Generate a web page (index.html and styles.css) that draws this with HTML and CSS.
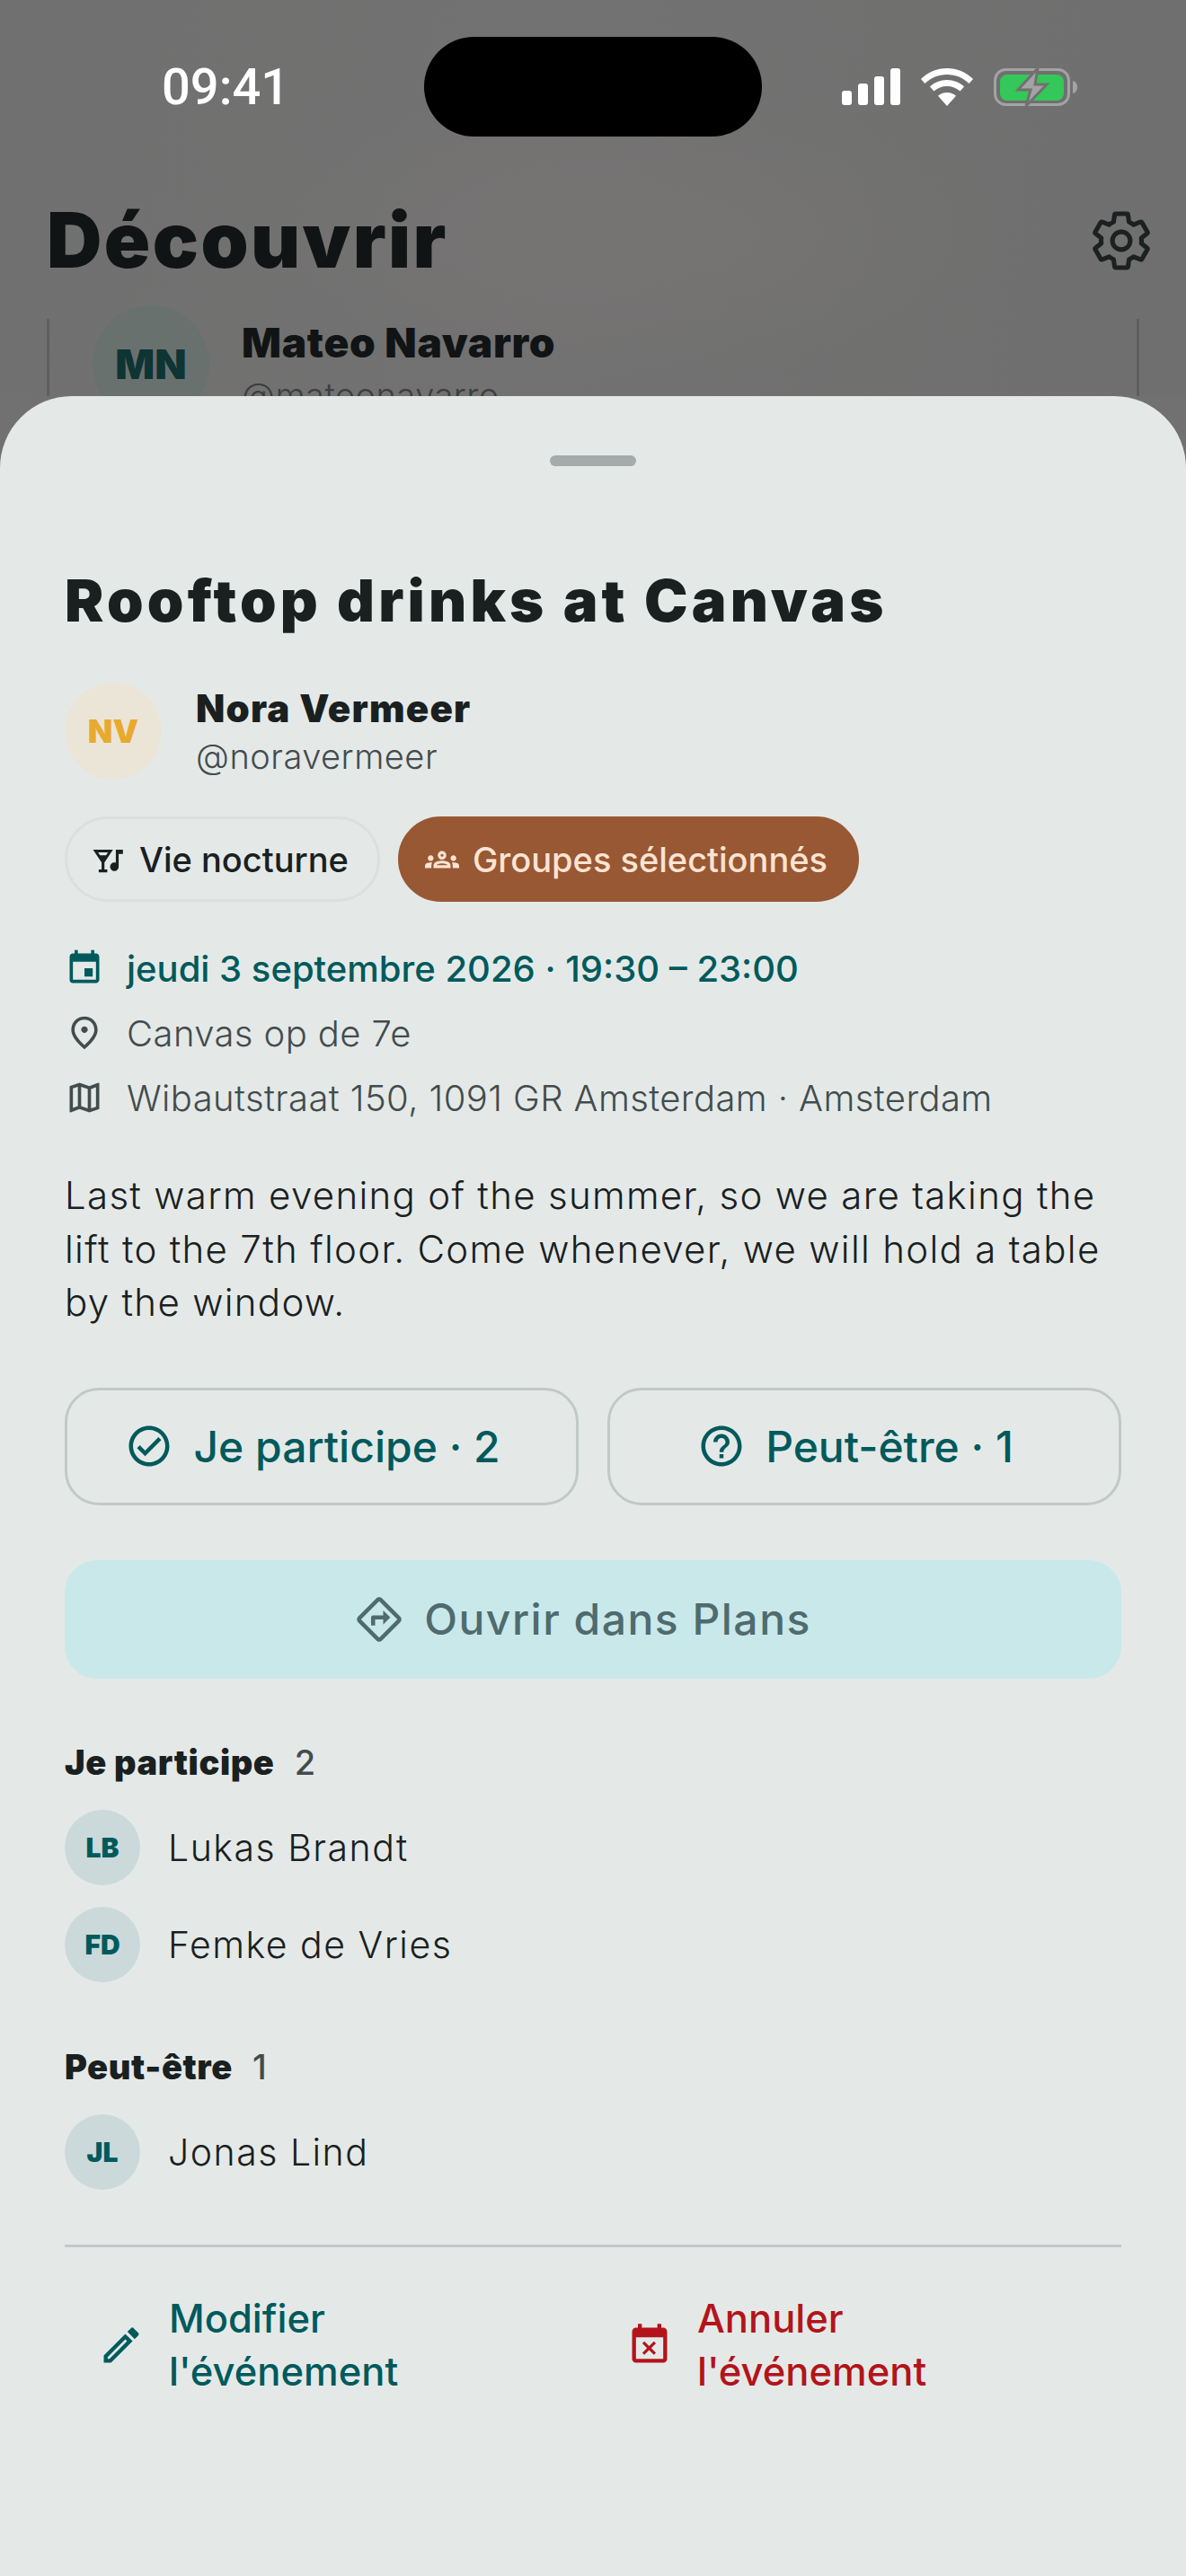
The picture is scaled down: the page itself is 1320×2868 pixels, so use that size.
FILE: index.html
```html
<!DOCTYPE html>
<html lang="fr">
<head>
    <meta charset="UTF-8">
    <meta name="viewport" content="width=device-width, initial-scale=1.0">
    <title>Rooftop drinks at Canvas</title>
    <link rel="stylesheet" href="styles.css">
</head>
<body>
    <div class="screen">
        <div class="backdrop">
            <div class="status-bar">
                <span class="clock">09:41</span>
                <div class="island"></div>
                <div class="status-icons">
                    <svg class="signal" viewBox="0 0 65 41" fill="#fff">
                        <rect x="0" y="25" width="11" height="16" rx="3"/>
                        <rect x="18" y="17" width="11" height="24" rx="3"/>
                        <rect x="36" y="9" width="11" height="32" rx="3"/>
                        <rect x="54" y="0" width="11" height="41" rx="3"/>
                    </svg>
                    <svg class="wifi" viewBox="0 0 58 42" fill="#fff">
                        <path d="M29 0c11 0 21 4 29 12l-4.500 5C47 10.500 38.500 7 29 7S11 10.500 4.500 17L0 12C8 4 18 0 29 0z"/>
                        <path d="M29 13c7.500 0 14 2.800 19 7.500L43.500 25.500C39.600 22 34.600 20 29 20s-10.600 2-14.500 5.500L10 20.500C15 15.800 21.500 13 29 13z"/>
                        <path d="M29 27c4 0 7.500 1.400 10 3.800L29 42 19 30.800C21.500 28.400 25 27 29 27z"/>
                    </svg>
                    <svg class="battery" viewBox="0 0 93 44">
                        <rect x="1.500" y="2.500" width="82" height="39" rx="12" fill="none" stroke="#a3a3a3" stroke-width="3"/>
                        <rect x="7" y="8" width="71" height="29" rx="8" fill="#34c759"/>
                        <path d="M88 15c3 .5 5 3.500 5 7s-2 6.500-5 7z" fill="#a3a3a3"/>
                        <path d="M49 1L27 25h14l-5 18 23-24H46z" fill="#a3a3a3" stroke="#707170" stroke-width="3"/>
                    </svg>
                </div>
            </div>
            <div class="page-head">
                <h1>Découvrir</h1>
                <svg class="gear" viewBox="0 0 24 24" fill="none" stroke="#1c2020" stroke-width="1.700" stroke-linejoin="round">
                    <path d="M19.430 12.980c.04-.32.07-.64.07-.98s-.03-.66-.07-.98l2.110-1.650c.19-.15.24-.42.12-.64l-2-3.460c-.12-.22-.39-.3-.61-.22l-2.490 1c-.52-.4-1.080-.73-1.690-.98l-.38-2.650C14.460 2.180 14.250 2 14 2h-4c-.25 0-.46.18-.49.42l-.38 2.650c-.61.25-1.170.59-1.690.98l-2.490-1c-.23-.09-.49 0-.61.22l-2 3.460c-.13.22-.07.49.12.64l2.110 1.650c-.04.32-.07.65-.07.98s.03.66.07.98l-2.110 1.650c-.19.15-.24.42-.12.64l2 3.460c.12.22.39.3.61.22l2.490-1c.52.4 1.080.73 1.690.98l.38 2.650c.03.24.24.42.49.42h4c.25 0 .46-.18.49-.42l.38-2.650c.61-.25 1.170-.59 1.690-.98l2.490 1c.23.09.49 0 .61-.22l2-3.460c.12-.22.07-.49-.12-.64l-2.110-1.650z"/>
                    <circle cx="12" cy="12" r="3.300"/>
                </svg>
            </div>
            <div class="behind-card">
                <div class="behind-avatar">MN</div>
                <div>
                    <div class="behind-name">Mateo Navarro</div>
                    <div class="behind-handle">@mateonavarro</div>
                </div>
            </div>
        </div>

        <div class="sheet">
            <div class="handle"></div>
            <h2 class="event-title">Rooftop drinks at Canvas</h2>

            <div class="host">
                <div class="host-avatar">NV</div>
                <div>
                    <div class="host-name">Nora Vermeer</div>
                    <div class="host-handle">@noravermeer</div>
                </div>
            </div>

            <div class="chips">
                <div class="chip">
                    <svg class="chip-icon" viewBox="0 0 24 24" fill="#1a2020"><path d="M1 5h14l-6 9v5h2v2H5v-2h2v-5L1 5zm9.100 4l1.400-2H4.490l1.400 2h4.210zM17 5h5v3h-3v9c0 1.660-1.340 3-3 3s-3-1.340-3-3 1.340-3 3-3c.35 0 .69.07 1 .18V5z"/></svg>
                    Vie nocturne
                </div>
                <div class="chip chip-brown">
                    <svg class="chip-icon" viewBox="0 0 24 24" fill="#fde3d3"><path d="M4 13c1.100 0 2-.9 2-2s-.9-2-2-2-2 .9-2 2 .9 2 2 2zm1.130 1.100c-.37-.06-.74-.1-1.130-.1-.99 0-1.930.21-2.780.58C.48 14.900 0 15.620 0 16.430V18h4.500v-1.610c0-.83.23-1.610.63-2.290zM20 13c1.100 0 2-.9 2-2s-.9-2-2-2-2 .9-2 2 .9 2 2 2zm4 3.430c0-.81-.48-1.530-1.220-1.850C21.930 14.210 20.990 14 20 14c-.39 0-.76.04-1.130.1.4.68.63 1.460.63 2.290V18H24v-1.570zm-7.760-2.780c-1.170-.52-2.610-.9-4.240-.9s-3.070.39-4.240.9C6.680 14.130 6 15.210 6 16.390V18h12v-1.610c0-1.180-.68-2.260-1.760-2.740zM8.070 16c.09-.23.13-.39.91-.69.97-.38 1.990-.56 3.020-.56s2.050.18 3.020.56c.77.3.81.46.91.69H8.070zM12 8c.55 0 1 .45 1 1s-.45 1-1 1-1-.45-1-1 .45-1 1-1m0-2c-1.660 0-3 1.340-3 3s1.340 3 3 3 3-1.340 3-3-1.340-3-3-3z"/></svg>
                    Groupes sélectionnés
                </div>
            </div>

            <div class="meta-row meta-date">
                <svg class="meta-icon" viewBox="0 0 24 24" fill="#005a5c"><path d="M17 12h-5v5h5v-5zM16 1v2H8V1H6v2H5c-1.110 0-1.990.9-1.990 2L3 19a2 2 0 0 0 2 2h14c1.100 0 2-.9 2-2V5c0-1.100-.9-2-2-2h-1V1h-2zm3 18H5V8h14v11z"/></svg>
                jeudi 3 septembre 2026 · 19:30 – 23:00
            </div>
            <div class="meta-row">
                <svg class="meta-icon" viewBox="0 0 24 24" fill="#434c4c"><path d="M12 12c-1.100 0-2-.9-2-2s.9-2 2-2 2 .9 2 2-.9 2-2 2zm6-1.800C18 6.570 15.350 4 12 4s-6 2.570-6 6.200c0 2.340 1.950 5.440 6 9.140 4.050-3.700 6-6.800 6-9.140zM12 2c4.200 0 8 3.220 8 8.200 0 3.320-2.670 7.250-8 11.800-5.330-4.550-8-8.480-8-11.800C4 5.220 7.800 2 12 2z"/></svg>
                Canvas op de 7e
            </div>
            <div class="meta-row">
                <svg class="meta-icon" viewBox="0 0 24 24" fill="#434c4c"><path d="M20.500 3l-.16.03L15 5.100 9 3 3.360 4.900c-.21.07-.36.25-.36.48V20.500c0 .28.22.5.5.5l.16-.03L9 18.900l6 2.100 5.640-1.900c.21-.07.36-.25.36-.48V3.500c0-.28-.22-.5-.5-.5zM10 5.470l4 1.400v11.660l-4-1.400V5.470zm-5 .99l3-1.010v11.700l-3 1.160V6.460zm14 11.080l-3 1.010V6.860l3-1.160v11.840z"/></svg>
                Wibautstraat 150, 1091 GR Amsterdam · Amsterdam
            </div>

            <p class="description">Last warm evening of the summer, so we are taking the lift to the 7th floor. Come whenever, we will hold a table by the window.</p>

            <div class="rsvp">
                <button class="rsvp-button">
                    <svg class="btn-icon" viewBox="0 0 24 24" fill="#005a5c"><path d="M12 2C6.480 2 2 6.480 2 12s4.480 10 10 10 10-4.480 10-10S17.520 2 12 2zm0 18c-4.410 0-8-3.590-8-8s3.590-8 8-8 8 3.590 8 8-3.590 8-8 8zm-2-5.830l6.590-6.590L18 9l-8 8-4-4 1.410-1.410L10 14.170z"/></svg>
                    Je participe · 2
                </button>
                <button class="rsvp-button">
                    <svg class="btn-icon" viewBox="0 0 24 24" fill="#005a5c"><path d="M11 18h2v-2h-2v2zm1-16C6.480 2 2 6.480 2 12s4.480 10 10 10 10-4.480 10-10S17.520 2 12 2zm0 18c-4.410 0-8-3.590-8-8s3.590-8 8-8 8 3.590 8 8-3.590 8-8 8zm0-14c-2.210 0-4 1.790-4 4h2c0-1.100.9-2 2-2s2 .9 2 2c0 2-3 1.750-3 5h2c0-2.250 3-2.500 3-5 0-2.210-1.790-4-4-4z"/></svg>
                    Peut-être · 1
                </button>
            </div>

            <button class="plans-button">
                <svg class="btn-icon" viewBox="0 0 24 24" fill="#4f6b6e"><path d="M22.430 10.590l-9.010-9.010c-.75-.75-2.070-.76-2.830 0l-9 9c-.78.78-.78 2.040 0 2.820l9 9c.39.39.9.58 1.410.58.51 0 1.020-.19 1.410-.58l8.990-8.990c.79-.76.8-2.020.03-2.820zm-10.420 10.400l-9-9 9-9 9 9-9 9zM8 11v4h2v-3h4v2.500l3.500-3.500L14 7.500V10H9c-.55 0-1 .45-1 1z"/></svg>
                Ouvrir dans Plans
            </button>

            <div class="guest-section">
                <div class="guest-title">Je participe <span class="guest-count">2</span></div>
                <div class="guest"><div class="guest-avatar">LB</div>Lukas Brandt</div>
                <div class="guest"><div class="guest-avatar">FD</div>Femke de Vries</div>
            </div>
            <div class="guest-section guest-section-next">
                <div class="guest-title">Peut-être <span class="guest-count">1</span></div>
                <div class="guest"><div class="guest-avatar">JL</div>Jonas Lind</div>
            </div>

            <div class="actions">
                <div class="action">
                    <svg class="action-icon" viewBox="0 0 24 24" fill="#005a5c"><path d="M3 17.250V21h3.750L17.810 9.940l-3.750-3.750L3 17.250zM5.920 19H5v-.92l9.060-9.060.92.92L5.920 19zM20.710 7.040a.996.996 0 0 0 0-1.410l-2.340-2.340a1.003 1.003 0 0 0-1.410 0l-1.830 1.830 3.750 3.750 1.830-1.830z"/></svg>
                    <span>Modifier<br>l'événement</span>
                </div>
                <div class="action action-danger">
                    <svg class="action-icon" viewBox="0 0 24 24" fill="#b3141a"><path d="M9.310 17l2.440-2.440L14.190 17l1.060-1.060-2.440-2.440 2.440-2.440L14.190 10l-2.440 2.440L9.310 10l-1.060 1.060 2.440 2.440-2.440 2.440L9.310 17zM19 3h-1V1h-2v2H8V1H6v2H5c-1.110 0-1.990.9-1.990 2L3 19c0 1.100.89 2 2 2h14c1.100 0 2-.9 2-2V5c0-1.100-.9-2-2-2zm0 16H5V8h14v11z"/></svg>
                    <span>Annuler<br>l'événement</span>
                </div>
            </div>
        </div>
    </div>
</body>
</html>
```

FILE: styles.css
```css
* {
    box-sizing: border-box;
}
body {
    margin: 0;
    padding: 0;
    font-family: Inter, "Noto Sans", sans-serif;
    color: #1a2020;
}
.screen {
    width: 1320px;
    height: 2868px;
    overflow: hidden;
    background: #707170;
}

/* dimmed page behind the sheet */
.backdrop {
    height: 441px;
    padding-top: 41px;
    overflow: hidden;
    background:
        radial-gradient(ellipse 420px 160px at 700px 260px, #767473, transparent),
        linear-gradient(100deg, #6f706f 0%, #737272 45%, #6e6f6e 100%);
}
.status-bar {
    display: flex;
    align-items: center;
    height: 111px;
    padding-left: 180px;
}
.clock {
    width: 292px;
    color: #fff;
    font-family: Roboto, sans-serif;
    font-size: 56px;
    font-weight: 500;
}
.island {
    width: 376px;
    height: 111px;
    background: #000;
    border-radius: 56px;
}
.status-icons {
    display: flex;
    align-items: center;
    margin-left: 89px;
    gap: 23px;
}
.signal {
    width: 65px;
    height: 41px;
}
.wifi {
    width: 58px;
    height: 42px;
}
.battery {
    width: 93px;
    height: 44px;
}
.page-head {
    display: flex;
    justify-content: space-between;
    align-items: center;
    padding: 0 36px 0 52px;
    margin-top: 70px;
}
.page-head h1 {
    margin: 0;
    font-size: 85px;
    font-weight: 900;
    line-height: 92px;
    letter-spacing: 2.400px;
    color: #111414;
}
.gear {
    width: 72px;
    height: 72px;
}
.behind-card {
    display: flex;
    gap: 36px;
    height: 200px;
    margin: 41px 52px 0;
    padding: 0 48px;
    border-left: 3px solid #5c5f5e;
    border-right: 3px solid #5c5f5e;
}
.behind-avatar {
    flex: none;
    width: 130px;
    height: 130px;
    margin-top: -15px;
    border-radius: 50%;
    background: #69716f;
    color: #0e3434;
    font-size: 46px;
    font-weight: 900;
    line-height: 130px;
    text-align: center;
}
.behind-name {
    font-size: 46px;
    font-weight: 900;
    letter-spacing: 0.700px;
    line-height: 56px;
    color: #111414;
    margin-top: -2px;
}
.behind-handle {
    font-size: 38px;
    font-weight: 300;
    letter-spacing: 0.500px;
    color: #3b3f3f;
    margin-top: 8px;
}

/* bottom sheet */
.sheet {
    height: 2427px;
    padding: 66px 72px 0;
    background: #e4e9e8;
    border-radius: 80px 80px 0 0;
}
.handle {
    width: 96px;
    height: 12px;
    margin: 0 auto;
    border-radius: 6px;
    background: #a5abaa;
}
.event-title {
    margin: 111px 0 0;
    font-size: 65px;
    font-weight: 900;
    line-height: 78px;
    letter-spacing: 4.200px;
    color: #1a2020;
}
.host {
    display: flex;
    align-items: center;
    gap: 38px;
    margin-top: 52px;
}
.host-avatar {
    flex: none;
    width: 108px;
    height: 108px;
    border-radius: 50%;
    background: #ebe5d8;
    color: #e9a92f;
    font-size: 36px;
    font-weight: 900;
    line-height: 108px;
    text-align: center;
}
.host-name {
    font-size: 42px;
    font-weight: 900;
    letter-spacing: 1.200px;
    line-height: 50px;
}
.host-handle {
    font-size: 38px;
    font-weight: 300;
    letter-spacing: 0.500px;
    line-height: 44px;
    margin-top: 6px;
    color: #434c4c;
}
.chips {
    display: flex;
    gap: 20px;
    margin-top: 41px;
}
.chip {
    display: flex;
    align-items: center;
    gap: 15px;
    height: 95px;
    padding: 0 32px 0 27px;
    border: 3px solid #dcdfdf;
    border-radius: 48px;
    font-size: 38px;
    font-weight: 500;
    white-space: nowrap;
}
.chip-brown {
    background: #975833;
    border-color: #975833;
    color: #fde3d3;
}
.chip-icon {
    width: 38px;
    height: 38px;
}
.meta-row {
    display: flex;
    align-items: center;
    gap: 25px;
    height: 72px;
    font-size: 40px;
    font-weight: 300;
    letter-spacing: 0.400px;
    color: #434c4c;
}
.meta-date {
    margin-top: 38px;
    font-weight: 500;
    letter-spacing: 0;
    color: #005a5c;
}
.meta-icon {
    flex: none;
    width: 44px;
    height: 44px;
}
.description {
    margin: 43px 0 0;
    font-size: 42px;
    font-weight: 300;
    letter-spacing: 1.300px;
    line-height: 59.500px;
    color: #1a2020;
}
.rsvp {
    display: flex;
    gap: 32px;
    margin-top: 65px;
}
.rsvp-button {
    display: flex;
    justify-content: center;
    align-items: center;
    gap: 22px;
    flex: 1;
    height: 131px;
    padding: 0 20px 0 0;
    background: none;
    border: 3px solid #c1c9c8;
    border-radius: 38px;
    font-family: inherit;
    font-size: 48px;
    font-weight: 500;
    color: #005a5c;
}
.btn-icon {
    flex: none;
    width: 54px;
    height: 54px;
}
.plans-button {
    display: flex;
    justify-content: center;
    align-items: center;
    gap: 23px;
    width: 100%;
    height: 132px;
    margin-top: 61px;
    padding: 0 22px 0 0;
    background: #c9e8ea;
    border: none;
    border-radius: 36px;
    font-family: inherit;
    font-size: 48px;
    font-weight: 500;
    letter-spacing: 1.500px;
    color: #4f6b6e;
}
.guest-section {
    margin-top: 68px;
}
.guest-section-next {
    margin-top: 69px;
}
.guest-title {
    font-size: 38px;
    font-weight: 900;
    letter-spacing: 0.600px;
    line-height: 50px;
    margin-bottom: 28px;
}
.guest-count {
    margin-left: 14px;
    font-weight: 500;
    color: #434c4c;
}
.guest {
    display: flex;
    align-items: center;
    gap: 31px;
    margin-bottom: 24px;
    font-size: 41px;
    font-weight: 300;
    letter-spacing: 1.500px;
}
.guest-avatar {
    flex: none;
    width: 84px;
    height: 84px;
    border-radius: 50%;
    background: #cbd9da;
    color: #005a5c;
    font-size: 30px;
    font-weight: 900;
    letter-spacing: 0;
    line-height: 84px;
    text-align: center;
}
.actions {
    display: flex;
    margin-top: 61px;
    padding-top: 50px;
    border-top: 3px solid #c1c9c8;
}
.action {
    display: flex;
    align-items: center;
    gap: 27px;
    width: 588px;
    padding-left: 37px;
    font-size: 43.500px;
    font-weight: 500;
    line-height: 59.500px;
    color: #005a5c;
}
.action-danger {
    color: #b3141a;
}
.action-icon {
    flex: none;
    width: 52px;
    height: 52px;
}
```
